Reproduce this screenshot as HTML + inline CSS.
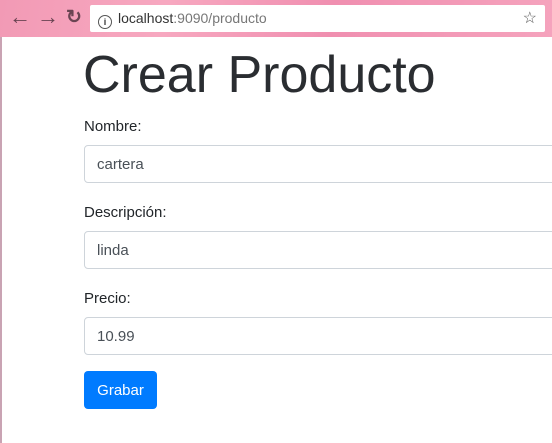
<!DOCTYPE html>
<html><head><style>
body{margin:0;width:552px;height:443px;overflow:hidden;background:#fff;font-family:"Liberation Sans",sans-serif;position:relative}
.bar{position:absolute;left:0;top:0;width:552px;height:37px;background:linear-gradient(100deg,#f29ab5,#f7a8c0 30%,#f08fb0 60%,#f5a3bd);}
.lb{position:absolute;left:0;top:37px;width:2px;height:406px;background:#c9a3b3}
.url{position:absolute;left:90px;top:5px;width:455px;height:27px;background:#fff;border-radius:2px;font-size:14px;line-height:27px;color:#333}
.url .g{color:#777}
.nav{position:absolute;top:4px;font-size:22px;color:#6a4452;font-weight:bold}
h1{position:absolute;left:83px;top:45px;margin:0;font-weight:300;font-size:52px;color:#2a2d31;letter-spacing:0px;line-height:60px}
label{position:absolute;left:84px;font-size:15px;color:#212529}
.in{position:absolute;left:84px;width:480px;height:36px;border:1px solid #ced4da;border-radius:4px;font-size:15px;line-height:38px;padding-left:12px;color:#495057;box-sizing:content-box}
.btn{position:absolute;left:84px;top:371px;width:73px;height:38px;background:#007bff;border-radius:4px;color:#fff;font-size:15px;line-height:40px;text-align:center}
</style></head><body>
<div class="bar"></div><div class="lb"></div>
<div class="nav" style="left:9px">&#8592;</div>
<div class="nav" style="left:37px">&#8594;</div>
<div class="nav" style="left:66px;font-size:19px;top:6px">&#8635;</div>
<div class="url"><span style="display:inline-block;width:12px;height:12px;border:1.5px solid #555;border-radius:50%;font-size:9px;line-height:12px;text-align:center;margin:0 6px 0 8px;vertical-align:-2px;font-weight:bold">i</span>localhost<span class="g">:9090/producto</span><span style="position:absolute;right:8px;top:0;font-size:16px;color:#555">&#9734;</span></div>
<h1>Crear Producto</h1>
<label style="top:118px">Nombre:</label>
<div class="in" style="top:145px">cartera</div>
<label style="top:204px">Descripción:</label>
<div class="in" style="top:231px">linda</div>
<label style="top:290px">Precio:</label>
<div class="in" style="top:317px">10.99</div>
<div class="btn">Grabar</div>
</body></html>
